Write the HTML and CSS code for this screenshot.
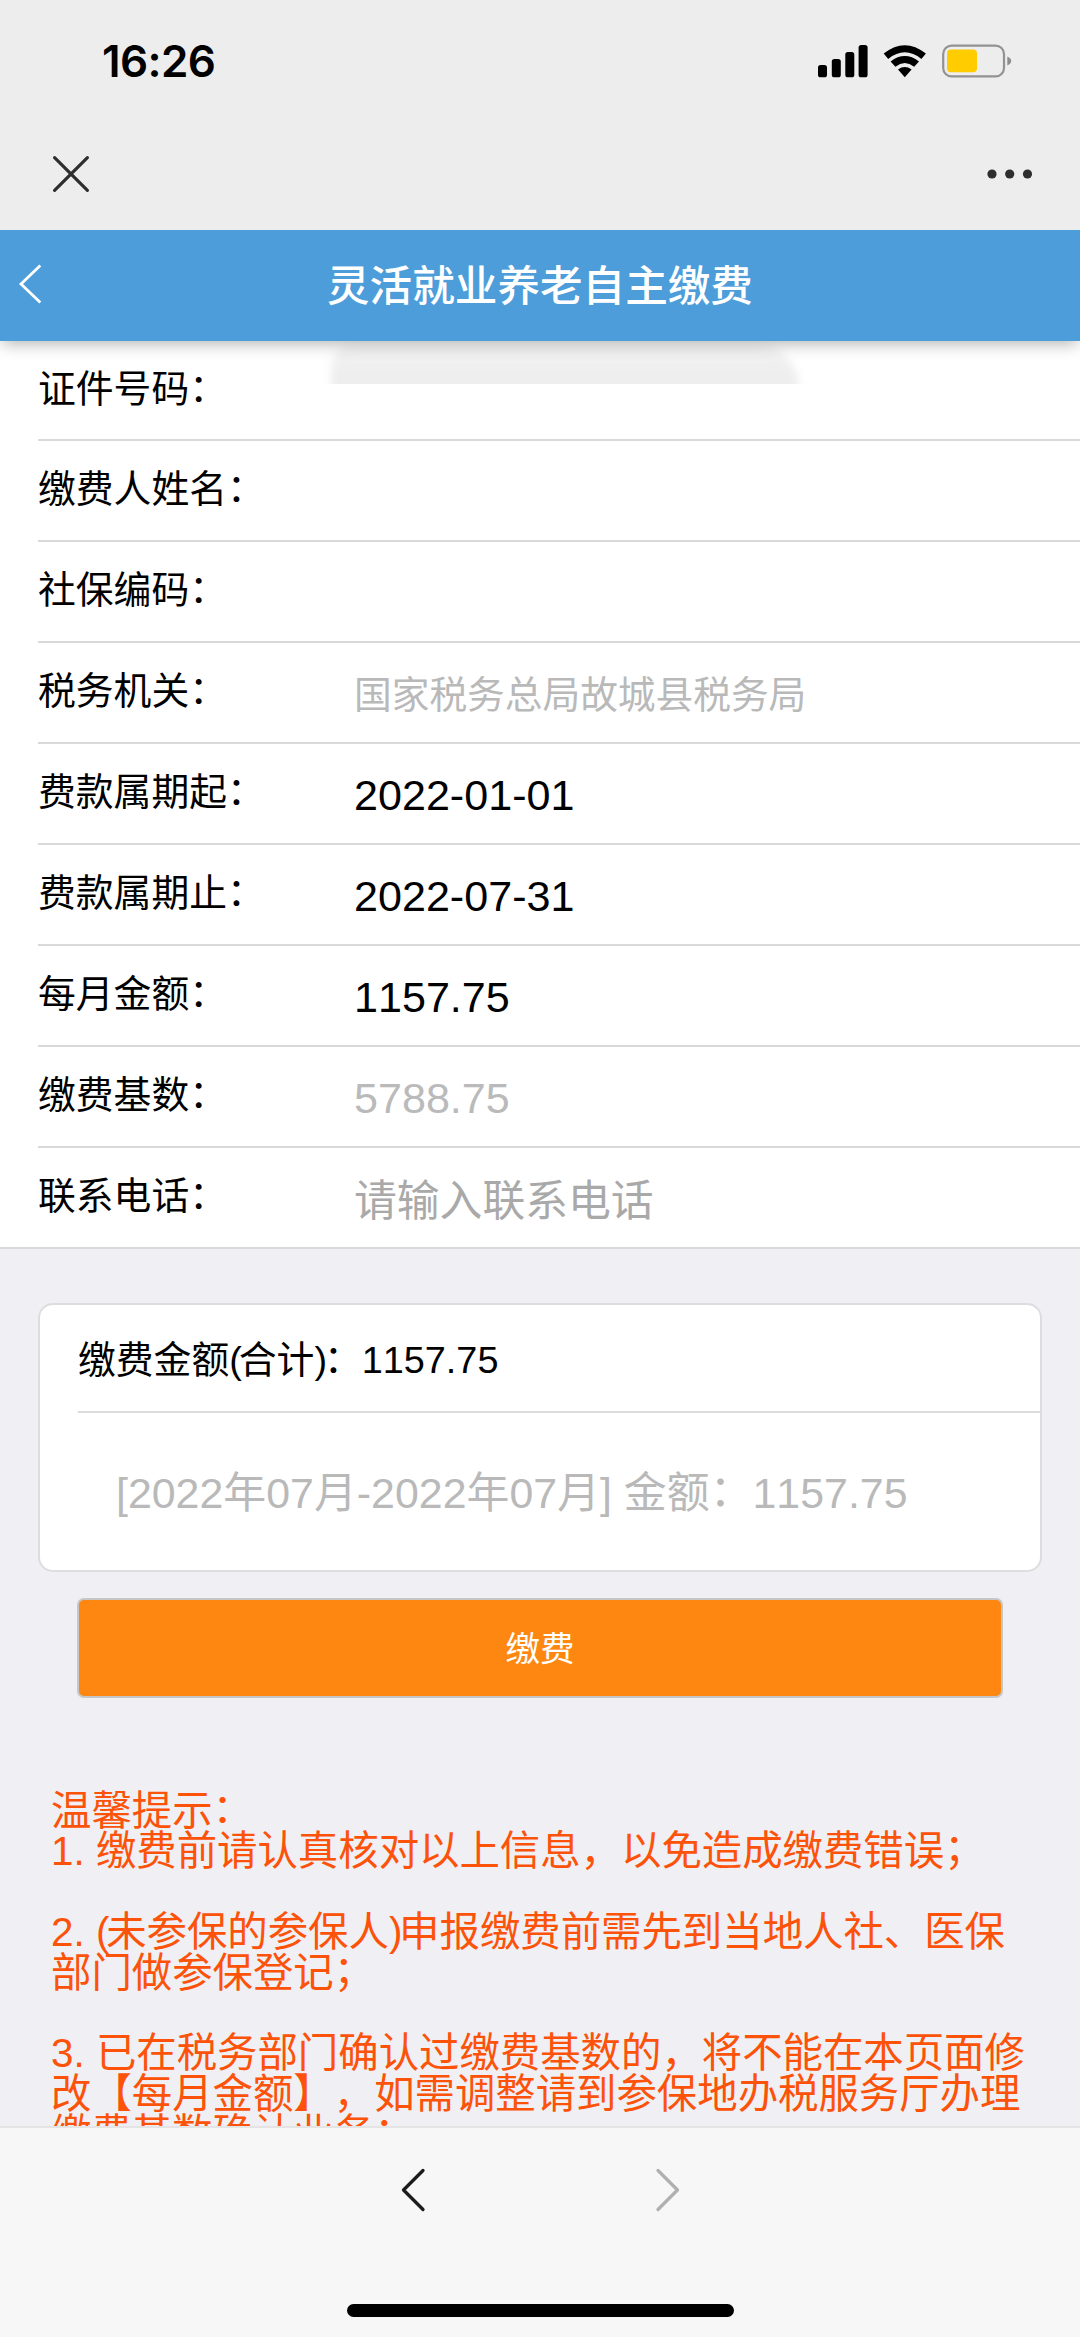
FILE: index.html
```html
<!DOCTYPE html>
<html lang="zh-CN">
<head>
<meta charset="utf-8">
<title>灵活就业养老自主缴费</title>
<link rel="stylesheet" href="styles.css">
</head>
<body>
<div class="screen">
  <header class="system">
    <div class="status">
      <span class="clock">16:26</span>
      <svg class="status-icons" width="194" height="34" viewBox="818 44 194 34">
        <rect x="818" y="65" width="9" height="12.3" rx="2.6"/>
        <rect x="831.8" y="59" width="9" height="18.3" rx="2.6"/>
        <rect x="845.3" y="52" width="9" height="25.3" rx="2.6"/>
        <rect x="858.6" y="45" width="9" height="32.3" rx="2.6"/>
        <path d="M883.7 53.6Q904.8 36.8 925.9 53.6L921.4 58.9Q904.8 45.8 888.2 58.9Z"/>
        <path d="M890.6 61.4Q904.8 50.6 919 61.4L914.2 66.8Q904.8 59.4 895.4 66.8Z"/>
        <path d="M898 69.5Q904.8 64.6 911.6 69.5L904.8 77.2Z"/>
        <rect x="943.2" y="45.6" width="60.8" height="30.8" rx="8.5" fill="none" stroke="#929292" stroke-width="2.2"/>
        <rect x="947" y="49.5" width="30" height="22.7" rx="4" fill="#fc0"/>
        <path d="M1007.3 56.6Q1011.2 58.2 1011.2 61T1007.3 65.4Z" fill="#8d8d8d"/>
      </svg>
    </div>
    <div class="webbar">
      <svg width="38" height="38" viewBox="0 0 38 38" fill="none" stroke="#2e2e2e" stroke-width="3.2" stroke-linecap="round"><path d="M2.6 2.6 35.4 35.4M35.4 2.6 2.6 35.4"/></svg>
      <svg width="46" height="10" viewBox="0 0 46 10" fill="#2e2e2e"><circle cx="5" cy="5" r="4.6"/><circle cx="22.7" cy="5" r="4.6"/><circle cx="40.5" cy="5" r="4.6"/></svg>
    </div>
  </header>

  <div class="titlebar">
    <svg class="back" width="24" height="40" viewBox="0 0 24 40" fill="none" stroke="#fff" stroke-width="2.8"><path d="M22.3 1.6 3 20 22.3 38.4"/></svg>
    <h1>灵活就业养老自主缴费</h1>
  </div>

  <main class="page">
    <div class="form">
      <div class="row"><span class="label">证件号码<i>：</i></span><span class="redacted"></span></div>
      <div class="row"><span class="label">缴费人姓名<i>：</i></span></div>
      <div class="row"><span class="label">社保编码<i>：</i></span></div>
      <div class="row"><span class="label">税务机关<i>：</i></span><span class="value office">国家税务总局故城县税务局</span></div>
      <div class="row"><span class="label">费款属期起<i>：</i></span><span class="value">2022-01-01</span></div>
      <div class="row"><span class="label">费款属期止<i>：</i></span><span class="value">2022-07-31</span></div>
      <div class="row"><span class="label">每月金额<i>：</i></span><span class="value">1157.75</span></div>
      <div class="row"><span class="label">缴费基数<i>：</i></span><span class="value muted">5788.75</span></div>
      <div class="row"><span class="label">联系电话<i>：</i></span><span class="value placeholder">请输入联系电话</span></div>
    </div>

    <section class="card">
      <div class="total">缴费金额<b>(</b>合计<b>)</b><i>：</i>1157.75</div>
      <div class="detail">[2022年07月-2022年07月] 金额<i>：</i>1157.75</div>
    </section>

    <div class="pay">缴费</div>

    <div class="tips">
      <p>温馨提示<i>：</i><br>1. 缴费前请认真核对以上信息，以免造成缴费错误<i>；</i></p>
      <p>2. <b>(</b>未参保的参保人<b>)</b>申报缴费前需先到当地人社、医保<br>部门做参保登记<i>；</i></p>
      <p>3. 已在税务部门确认过缴费基数的，将不能在本页面修<br>改【每月金额】，如需调整请到参保地办税服务厅办理<br>缴费基数确认业务<i>；</i></p>
    </div>
  </main>

  <footer class="bottombar">
    <div class="nav">
      <svg width="26" height="44" viewBox="0 0 26 44" fill="none" stroke="#1c1c1c" stroke-width="3.3" stroke-linecap="round" stroke-linejoin="round"><path d="M23 2.5 3.5 22 23 41.5"/></svg>
      <svg width="26" height="44" viewBox="0 0 26 44" fill="none" stroke="#b0b0b0" stroke-width="3.3" stroke-linecap="round" stroke-linejoin="round"><path d="M3 2.5 22.5 22 3 41.5"/></svg>
    </div>
    <div class="home"></div>
  </footer>
</div>
</body>
</html>
```
FILE: styles.css
```css
* { box-sizing: border-box; }

body {
  margin: 0;
  background: #f7f7f7;
  color: #000;
  font-family: "Liberation Sans", "Noto Sans CJK SC", sans-serif;
  font-kerning: none;
  text-spacing-trim: space-all;
}

svg { display: block; }

/* raised colons and semicolons, tight parentheses */
i { font-style: normal; vertical-align: 0.04em; line-height: 0; }
b { font-weight: 400; letter-spacing: -0.08em; }

.screen {
  display: flex;
  flex-direction: column;
  width: 1080px;
  height: 2337px;
  overflow: hidden;
}

/* system area */
.system { height: 230px; flex: none; background: #ededed; }

.status {
  display: flex;
  justify-content: space-between;
  align-items: flex-start;
  height: 155px;
  padding: 44px 68px 0 102px;
}

.clock {
  font: 600 44px/34px Inter, "Liberation Sans", sans-serif;
  letter-spacing: -0.6px;
}

.webbar {
  display: flex;
  justify-content: space-between;
  align-items: center;
  height: 38px;
  padding: 0 47px 0 52px;
}

/* page title */
.titlebar {
  display: flex;
  align-items: center;
  flex: none;
  height: 111px;
  padding: 0 18px;
  background: #4c9dd9;
  box-shadow: 0 4px 16px -2px rgba(0, 0, 0, 0.32);
  clip-path: inset(0 0 -24px 0);
  z-index: 1;
}

.back { margin-top: -4px; }

h1 {
  flex: 1;
  margin: 0 24px 0 0;
  color: #fff;
  font-size: 42.6px;
  font-weight: 500;
  line-height: 60px;
  text-align: center;
}

.page {
  flex: 1;
  min-height: 0;
  overflow: hidden;
  background: #efeff4;
}

/* payer form */
.form {
  padding-left: 38px;
  background: #fff;
  border-bottom: 2px solid #d9d9dc;
}

.row {
  display: flex;
  height: 101px;
  border-bottom: 2px solid #d9d9d9;
}
.row:first-child { height: 100px; }
.row:last-child { height: 99px; border: 0; }

.label {
  flex: none;
  width: 316px;
  font-size: 37.8px;
  line-height: 96px;
}

.value { font-size: 43.1px; line-height: 103px; }
.office { font-size: 37.7px; color: #b9b9b9; line-height: 105px; }
.muted { color: #bababa; }
.placeholder { font-size: 42.8px; color: #a9a9a9; line-height: 106px; }

/* masked ID number: soft sides, hard lower edge */
.redacted {
  width: 490px;
  height: 43px;
  margin-left: -34px;
  overflow: hidden;
}
.redacted::before {
  content: "";
  display: block;
  width: 468px;
  height: 70px;
  margin: 3px 0 0 11px;
  border-radius: 24px 44px 0 0;
  background: linear-gradient(#f3f3f3, #eee 30px);
  filter: blur(4px);
}

/* amount summary */
.card {
  height: 269px;
  margin: 54px 38px 26px;
  padding-left: 38px;
  border: 2px solid #dddde0;
  border-radius: 15px;
  background: #fff;
}

.total {
  height: 108px;
  border-bottom: 2px solid #dcdcdc;
  font-size: 37.8px;
  line-height: 110px;
}

.detail {
  padding-left: 38px;
  color: #b9b9b9;
  font-size: 42.9px;
  line-height: 161px;
  white-space: nowrap;
}

.pay {
  width: 926px;
  height: 100px;
  margin: 0 auto;
  border: 2px solid #c6c6c6;
  border-radius: 7px;
  background: #fe8711;
  color: #fff;
  font-size: 34.6px;
  line-height: 99px;
  text-align: center;
}

.tips {
  margin: 93px 0 0 51px;
  color: #fc5209;
  font-size: 40.4px;
  line-height: 40.4px;
  white-space: nowrap;
}
.tips p { margin: 0 0 40.4px; }

/* browser bar */
.bottombar {
  flex: none;
  height: 211px;
  padding-top: 40px;
  border-top: 2px solid #e4e4e5;
  background: #f7f7f7;
}

.nav {
  display: flex;
  justify-content: center;
  gap: 229px;
}

.home {
  width: 387px;
  height: 13px;
  margin: 92px auto 0;
  border-radius: 7px;
  background: #000;
}
```
